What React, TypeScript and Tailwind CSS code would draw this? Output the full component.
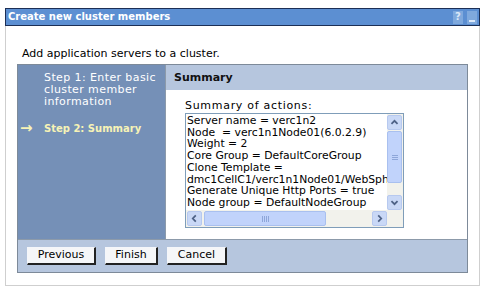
import React from 'react';

const lines = [
  'Server name = verc1n2',
  'Node  = verc1n1Node01(6.0.2.9)',
  'Weight = 2',
  'Core Group = DefaultCoreGroup',
  'Clone Template =',
  'dmc1CellC1/verc1n1Node01/WebSph',
  'Generate Unique Http Ports = true',
  'Node group = DefaultNodeGroup',
];

function ScrollBtn({ dir }: { dir: 'up' | 'down' | 'left' | 'right' }) {
  const d = {
    up: 'M4 9 L7.5 5.5 L11 9',
    down: 'M4 6 L7.5 9.5 L11 6',
    left: 'M9 4 L5.5 7.5 L9 11',
    right: 'M6 4 L9.5 7.5 L6 11',
  }[dir];
  return (
    <div className="flex h-[15px] w-[15px] items-center justify-center rounded-[2px] border border-[#b7c9ef] bg-[#c9d8f6]">
      <svg width="15" height="15" viewBox="0 0 15 15">
        <path d={d} fill="none" stroke="#4d6185" strokeWidth="2" />
      </svg>
    </div>
  );
}

function Button({ label, w }: { label: string; w: string }) {
  return (
    <div
      className={`flex h-[18px] ${w} items-center justify-center border-b-2 border-r-2 border-l border-t border-b-[#222] border-r-[#222] border-l-[#f4f6fa] border-t-[#f4f6fa] bg-[#f5f6f8] text-[11px] text-black`}
    >
      {label}
    </div>
  );
}

export default function App() {
  return (
    <div className="h-[292px] w-[485px] bg-white px-[5px] pt-[8px] font-['DejaVu_Sans',Verdana,sans-serif]">
      <div className="flex h-[18px] items-center justify-between border border-[#1c2f55] bg-[#5c8fd2] pl-[2px] pr-[2px]">
        <span className="text-[10px] font-bold leading-none text-white">Create new cluster members</span>
        <div className="flex gap-[4px]">
          <span className="flex h-[13px] w-[10px] items-center justify-center bg-[#7fa9dd] text-[10px] font-bold leading-none text-[#dbe8f8]">?</span>
          <span className="flex h-[13px] w-[10px] items-end justify-center bg-[#7fa9dd] pb-[2px]">
            <span className="h-[2px] w-[6px] bg-[#dbe8f8]" />
          </span>
        </div>
      </div>
      <div className="h-[260px] border-x border-b border-[#cfcfcf] px-[11px] pt-[22px]">
        <div className="mb-[4px] pl-[5px] text-[11px] leading-[12px] text-black">Add application servers to a cluster.</div>
        <div className="flex h-[209px] flex-col border border-[#7d8a99]">
          <div className="flex flex-1">
            <div className="w-[147px] bg-[#7590b7] pt-[7px] text-[11px] leading-[12px]">
              <div className="pl-[26px] tracking-[0.4px] text-white">
                Step 1: Enter basic
                <br />
                cluster member
                <br />
                information
              </div>
              <div className="mt-[13px] flex items-center">
                <span className="w-[26px] pl-[2px] text-[15px] font-bold leading-none text-[#f7f3b6]">→</span>
                <span className="text-[10px] font-bold text-[#f7f3b6]">Step 2: Summary</span>
              </div>
            </div>
            <div className="flex flex-1 flex-col border-l border-[#8c9aaa]">
              <div className="flex h-[25px] items-center bg-[#b6c6de] pl-[8px] pt-[1px] text-[11px] font-bold text-[#111]">Summary</div>
              <div className="pl-[19px] pt-[10px]">
                <div className="text-[11px] leading-[12px] tracking-[0.7px] text-black">Summary of actions:</div>
                <div className="mt-[1px] flex h-[115px] w-[219px] flex-col border border-[#7f9db9]">
                  <div className="flex flex-1 overflow-hidden">
                    <div className="flex-1 overflow-hidden whitespace-pre pl-[1px] pt-[1px] text-[10.8px] leading-[11.7px] text-black">
                      {lines.map((l) => (
                        <div key={l}>{l}</div>
                      ))}
                    </div>
                    <div className="flex w-[16px] flex-col bg-[#f2f2ec] pt-[1px]">
                      <ScrollBtn dir="up" />
                      <div className="mt-[1px] flex h-[52px] w-[15px] items-center justify-center rounded-[2px] border border-[#a9c0ef] bg-[#c1d3fb]">
                        <div className="flex flex-col gap-[1px]">
                          <span className="h-px w-[6px] bg-[#8ea6d9]" />
                          <span className="h-px w-[6px] bg-[#8ea6d9]" />
                          <span className="h-px w-[6px] bg-[#8ea6d9]" />
                        </div>
                      </div>
                      <div className="flex-1" />
                      <ScrollBtn dir="down" />
                    </div>
                  </div>
                  <div className="flex h-[17px] items-center bg-[#f2f2ec] pl-[1px]">
                    <ScrollBtn dir="left" />
                    <div className="ml-[2px] flex h-[15px] w-[122px] items-center justify-center rounded-[2px] border border-[#a9c0ef] bg-[#c1d3fb]">
                      <div className="flex gap-[1px]">
                        <span className="h-[6px] w-px bg-[#8ea6d9]" />
                        <span className="h-[6px] w-px bg-[#8ea6d9]" />
                        <span className="h-[6px] w-px bg-[#8ea6d9]" />
                        <span className="h-[6px] w-px bg-[#8ea6d9]" />
                      </div>
                    </div>
                    <div className="flex-1" />
                    <ScrollBtn dir="right" />
                    <div className="w-[16px]" />
                  </div>
                </div>
              </div>
            </div>
          </div>
          <div className="flex h-[33px] items-center gap-[9px] border-t border-[#8c9aaa] bg-[#b6c6de] pl-[9px]">
            <Button label="Previous" w="w-[69px]" />
            <Button label="Finish" w="w-[53px]" />
            <Button label="Cancel" w="w-[60px]" />
          </div>
        </div>
      </div>
    </div>
  );
}
